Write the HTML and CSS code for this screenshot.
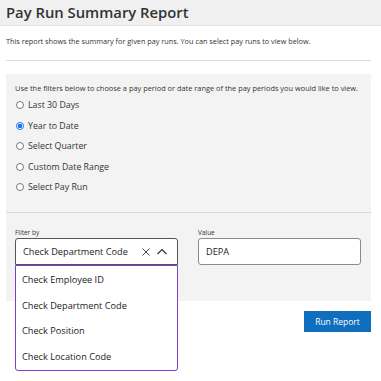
FILE: index.html
```html
<!DOCTYPE html>
<html>
<head>
<meta name="viewport" content="width=device-width, initial-scale=1.0">
<link rel="stylesheet" href="styles.css">
</head>
<body>

<div class="page-header">
  <h1>Pay Run Summary Report</h1>
</div>

<div class="page-body">
  <p class="intro">This report shows the summary for given pay runs. You can select pay runs to view below.</p>
  <hr class="rule">

  <div class="filter-panel">
    <p class="hint">Use the filters below to choose a pay period or date range of the pay periods you would like to view.</p>
    <div class="radio-list">
      <label class="radio"><span class="dot"></span>Last 30 Days</label>
      <label class="radio checked"><span class="dot"></span>Year to Date</label>
      <label class="radio"><span class="dot"></span>Select Quarter</label>
      <label class="radio"><span class="dot"></span>Custom Date Range</label>
      <label class="radio"><span class="dot"></span>Select Pay Run</label>
    </div>

    <div class="filter-row">
      <div class="field">
        <div class="field-label">Filter by</div>
        <div class="combo">
          <span class="combo-text">Check Department Code</span>
          <svg class="combo-icon" width="10" height="10" viewBox="0 0 10 10"><path d="M1.5 1.5 L8.5 8.5 M8.5 1.5 L1.5 8.5" stroke="#444" stroke-width="1" fill="none"/></svg>
          <svg class="combo-icon" width="12" height="10" viewBox="0 0 12 10"><path d="M1.5 7 L6 2.5 L10.5 7" stroke="#333" stroke-width="1.2" fill="none"/></svg>
          <div class="combo-menu">
            <div class="option">Check Employee ID</div>
            <div class="option">Check Department Code</div>
            <div class="option">Check Position</div>
            <div class="option">Check Location Code</div>
          </div>
        </div>
      </div>
      <div class="field">
        <div class="field-label">Value</div>
        <div class="input">DEPA</div>
      </div>
    </div>
  </div>

  <div class="actions">
    <button class="btn-primary">Run Report</button>
  </div>
</div>

</body>
</html>
```

FILE: styles.css
```css
* {box-sizing: border-box;}
body {
  margin: 0;
  min-height: 381px;
  font-family: "Open Sans", "Noto Sans", sans-serif;
  color: #222;
  background: #fff;
}
.page-header {
  background-color: #f0f0f0;
  height: 26px;
  border-bottom: 1px solid #e2e2e2;
  padding-left: 6px;
}
.page-header h1 {
  margin: 0;
  font-size: 14.8px;
  font-weight: 600;
  line-height: 25px;
  color: #333;
}
.page-body {
  padding: 0 10px 0 6px;
}
.intro {
  margin: 10px 0 0;
  font-size: 7.3px;
  line-height: 11px;
  color: #333;
}
.rule {
  margin: 13px 0 0;
  border: 0;
  border-top: 1px solid #dcdcdc;
  height: 0;
}
.filter-panel {
  margin-top: 13px;
  background-color: #f3f3f3;
  height: 227px;
}
.hint {
  margin: 0;
  padding: 9px 9px 0;
  font-size: 7.4px;
  line-height: 11px;
  color: #333;
}
.radio-list {
  display: flex;
  flex-direction: column;
  gap: 8.5px;
  padding: 5px 9px 0 10px;
}
.radio {
  display: flex;
  align-items: center;
  gap: 4px;
  font-size: 8.8px;
  line-height: 12px;
  color: #333;
}
.dot {
  width: 8px;
  height: 8px;
  border-radius: 50%;
  border: 1px solid #777;
  background: #fff;
}
.radio.checked .dot {
  border-color: #1a73e8;
  background: radial-gradient(circle, #1a73e8 0 2px, #fff 2.5px);
}
.filter-row {
  margin-top: 19px;
  border-top: 1px solid #dadada;
  display: flex;
  gap: 20px;
  padding: 15px 10px 0 9px;
}
.field {
  flex: 1;
}
.field-label {
  font-size: 6.5px;
  line-height: 9px;
  color: #333;
  margin-bottom: 1px;
}
.combo, .input {
  height: 27px;
  border: 1px solid #8a8a8a;
  border-radius: 3px;
  background: #fff;
  font-size: 9.2px;
  display: flex;
  align-items: center;
  padding: 0 7px;
  color: #222;
}
.combo {
  position: relative;
  border-color: #555;
  border-radius: 3px 3px 0 0;
  gap: 5px;
  padding-right: 9px;
}
.combo-text {
  flex: 1;
}
.combo-menu {
  position: absolute;
  top: 26px;
  left: -1px;
  right: -1px;
  background: #fff;
  border: 1px solid #7b3fcf;
  border-radius: 0 0 3px 3px;
  padding: 1px 0 1px;
  z-index: 5;
}
.option {
  height: 25.5px;
  line-height: 25.5px;
  padding: 0 6px;
  font-size: 9.2px;
  color: #222;
}
.actions {
  display: flex;
  justify-content: flex-end;
  margin-top: 10px;
}
.btn-primary {
  background-color: #106ebe;
  color: #fff;
  border: 0;
  font-family: inherit;
  font-size: 8.5px;
  width: 67px;
  height: 21px;
  padding: 0;
}
```
